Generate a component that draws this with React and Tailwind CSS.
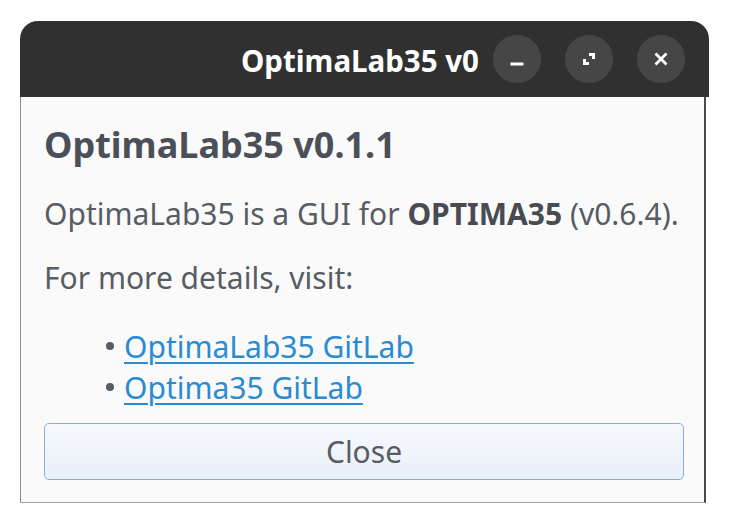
function MinimizeIcon() {
  return (
    <svg className="size-4" viewBox="0 0 16 16" fill="none" aria-hidden="true">
      <path d="M1.5 13h13" stroke="white" strokeWidth="3" />
    </svg>
  );
}

function MaximizeIcon() {
  return (
    <svg className="size-4" viewBox="0 0 16 16" fill="none" aria-hidden="true">
      <path d="M8 3.5h4.5V8" stroke="white" strokeWidth="3" />
      <path d="M3.5 8v4.5H8" stroke="white" strokeWidth="3" />
    </svg>
  );
}

function CloseIcon() {
  return (
    <svg className="size-4" viewBox="0 0 16 16" fill="none" aria-hidden="true">
      <path d="M2.5 2.5l11 11M13.5 2.5l-11 11" stroke="white" strokeWidth="2.8" />
    </svg>
  );
}

function TitleButton({ children, label }) {
  return (
    <button
      aria-label={label}
      className="grid size-[48px] place-items-center rounded-full bg-[#464646]"
    >
      {children}
    </button>
  );
}

export default function App() {
  return (
    <div className="h-[524px] w-[730px] bg-white pl-[20px] pt-[21px] font-['Noto_Sans','Open_Sans',sans-serif]">
      <div className="flex w-[689px] flex-col">
        <div className="flex h-[76px] items-center justify-end gap-[24px] rounded-t-[18px] bg-[#303030] pr-[24px]">
          <span className="mr-[-10px] mt-[3px] text-[29.5px] leading-[40px] font-bold text-white">
            OptimaLab35 v0
          </span>
          <TitleButton label="Minimize">
            <MinimizeIcon />
          </TitleButton>
          <TitleButton label="Maximize">
            <MaximizeIcon />
          </TitleButton>
          <TitleButton label="Close">
            <CloseIcon />
          </TitleButton>
        </div>

        <div className="mr-[3px] flex h-[406px] flex-col border-b border-l border-r-2 border-b-[#a0a0a0] border-l-[#8a8a8a] border-r-[#4a4a4a] bg-[#fafafa] pb-[22px] pl-[23px] pr-[20px]">
          <h1 className="mt-[26px] text-[36px] font-bold leading-[44px] text-[#4b5058]">
            OptimaLab35 v0.1.1
          </h1>
          <p className="mt-[27px] text-[30px] leading-[40px] text-[#585d64]">
            OptimaLab35 is a GUI for <b className="font-bold text-[#484c52]">OPTIMA35</b> (v0.6.4).
          </p>
          <p className="mt-[24px] text-[30px] leading-[40px] text-[#585d64]">
            For more details, visit:
          </p>
          <ul className="mt-[28px] flex flex-col pl-[62px] text-[30px] leading-[41px]">
            <li className="flex items-center gap-[10px]">
              <span className="mt-[-2px] size-[8px] rounded-full bg-[#585d64]" />
              <a
                href="#"
                className="text-[#2a8bd3] underline decoration-[2px] underline-offset-[4px]"
              >
                OptimaLab35 GitLab
              </a>
            </li>
            <li className="flex items-center gap-[10px]">
              <span className="mt-[-2px] size-[8px] rounded-full bg-[#585d64]" />
              <a
                href="#"
                className="text-[#2a8bd3] underline decoration-[2px] underline-offset-[4px]"
              >
                Optima35 GitLab
              </a>
            </li>
          </ul>
          <button className="mt-auto h-[57px] w-full rounded-[5px] border border-[#82aee6] bg-gradient-to-b from-[#f7f9fc] to-[#e9f0f9] text-[30px] text-[#585d64]">
            Close
          </button>
        </div>
      </div>
    </div>
  );
}
